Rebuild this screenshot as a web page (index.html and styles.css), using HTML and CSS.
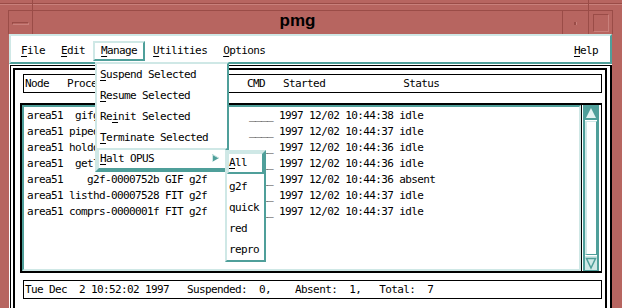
FILE: index.html
```html
<!DOCTYPE html>
<html>
<head>
<meta charset="utf-8">
<title>pmg</title>
<link rel="stylesheet" href="styles.css">
</head>
<body>
<div class="win">
  <div class="tb-top"><div class="tt-l"></div><div class="tt-m"></div><div class="tt-r"></div></div>
  <div class="tb-main">
    <div class="edge-l"></div>
    <div class="tb-btn btn-min"><span class="min-bar"></span></div>
    <div class="title">pmg</div>
    <div class="tb-btn btn-dot"><span class="dot"></span></div>
    <div class="tb-btn btn-max"><span class="sq"></span></div>
    <div class="edge-r"></div>
  </div>
  <div class="client">
    <div class="menubar">
      <span class="mi"><u>F</u>ile</span>
      <span class="mi"><u>E</u>dit</span>
      <span class="mi active"><u>M</u>anage</span>
      <span class="mi"><u>U</u>tilities</span>
      <span class="mi"><u>O</u>ptions</span>
      <span class="spacer"></span>
      <span class="mi"><u>H</u>elp</span>
    </div>
    <div class="outer">
      <div class="inner">
        <div class="hdr">Node   Process                       CMD   Started             Status</div>
        <div class="listframe">
          <div class="list">
<div class="row">area51  gifgen-000752b GIF gif       ____ 1997 12/02 10:44:38 idle</div>
<div class="row">area51 pipedr-0000752b GIF g2f       ____ 1997 12/02 10:44:37 idle</div>
<div class="row">area51 holddr-0000752b GIF g2f       ____ 1997 12/02 10:44:36 idle</div>
<div class="row">area51  getlst-000752b GIF g2f       ____ 1997 12/02 10:44:36 idle</div>
<div class="row">area51    g2f-0000752b GIF g2f       ____ 1997 12/02 10:44:36 absent</div>
<div class="row">area51 listhd-00007528 FIT g2f       ____ 1997 12/02 10:44:37 idle</div>
<div class="row">area51 comprs-0000001f FIT g2f       ____ 1997 12/02 10:44:37 idle</div>
          </div>
          <div class="divider"></div>
          <div class="sb">
            <svg class="sb-arrow" width="12" height="14" viewBox="0 0 12 14"><rect width="12" height="14" fill="#4f9f9a"/><polygon points="6,2 11,12 1,12" fill="#e4f3f2"/></svg>
            <div class="thumb"></div>
            <svg class="sb-arrow" width="12" height="14" viewBox="0 0 12 14"><rect width="12" height="14" fill="#cfe8e6"/><polygon points="1.5,2.5 10.5,2.5 6,12" fill="#cfe8e6" stroke="#4f9f9a" stroke-width="1.5"/></svg>
          </div>
        </div>
        <div class="status">Tue Dec  2 10:52:02 1997   Suspended:  0,    Absent:  1,   Total:  7</div>
      </div>
    </div>

    <div class="dropdown">
      <div class="dd-item"><u>S</u>uspend Selected</div>
      <div class="dd-item"><u>R</u>esume Selected</div>
      <div class="dd-item">Re<u>i</u>nit Selected</div>
      <div class="dd-item"><u>T</u>erminate Selected</div>
      <div class="dd-item active"><span><u>H</u>alt OPUS</span><svg class="casc" width="7" height="8" viewBox="0 0 7 8"><polygon points="0,0 7,4 0,8" fill="#4f9f9a"/><polyline points="0.5,8 0.5,0.5 6,3.6" fill="none" stroke="#cfe8e6" stroke-width="1"/></svg></div>
    </div>

    <div class="submenu">
      <div class="sm-item active"><u>A</u>ll</div>
      <div class="sm-item">g2f</div>
      <div class="sm-item">quick</div>
      <div class="sm-item">red</div>
      <div class="sm-item">repro</div>
    </div>
  </div>
</div>
</body>
</html>
```
FILE: styles.css
```css
:root {
  --red: #b76560;
  --red-dark: #9a4c47;
  --red-light: #c9807b;
  --teal: #4f9f9a;
  --light: #cfe8e6;
}

* { box-sizing: border-box; }

html, body {
  margin: 0;
  padding: 0;
}

body {
  width: 622px;
  height: 308px;
  overflow: hidden;
  background: var(--red);
  font-family: "DejaVu Sans Mono", monospace;
  font-size: 11px;
  letter-spacing: -0.62px;
  color: #000;
}

u {
  text-decoration: underline;
  text-underline-offset: 2px;
}

/* ---------- title bar ---------- */
.tb-top {
  display: flex;
  height: 10px;
}
.tt-l, .tt-m, .tt-r {
  height: 10px;
  background: linear-gradient(to bottom, transparent 3px, var(--red-dark) 3px, var(--red-dark) 4px, var(--red-light) 4px, var(--red-light) 5px, transparent 5px);
}
.tt-l { width: 33px; border-right: 1px solid var(--red-dark); }
.tt-m { width: 556px; border-right: 1px solid var(--red-dark); }
.tt-r { flex: 1; }

.tb-main {
  display: flex;
  height: 24px;
}
.edge-l { width: 8px; }
.edge-r { flex: 1; }
.tb-btn {
  display: flex;
  align-items: center;
  border-top: 1px solid var(--red-dark);
  border-left: 1px solid var(--red-dark);
}
.btn-min {
  width: 25px;
  border-right: 1px solid var(--red-dark);
  padding-left: 3px;
  padding-top: 1px;
}
.min-bar {
  display: block;
  width: 17px;
  height: 3px;
  border-top: 1px solid var(--red-dark);
  border-left: 1px solid var(--red-dark);
  border-bottom: 1px solid var(--red-light);
  border-right: 1px solid var(--red-light);
}
.title {
  width: 529px;
  border-top: 1px solid var(--red-dark);
  text-align: center;
  font-family: "Liberation Sans", Arial, sans-serif;
  font-weight: bold;
  font-size: 17px;
  letter-spacing: 0;
  line-height: 20px;
}
.btn-dot {
  width: 26px;
  justify-content: center;
  padding-top: 1px;
}
.dot {
  display: block;
  width: 3px;
  height: 3px;
  background: var(--red-dark);
  border-right: 1px solid var(--red-light);
}
.btn-max {
  width: 25px;
  border-right: 1px solid var(--red-dark);
  padding-left: 4px;
  padding-top: 1px;
}
.sq {
  display: block;
  width: 16px;
  height: 18px;
  border-top: 1px solid var(--red-dark);
  border-left: 1px solid var(--red-dark);
  border-bottom: 1px solid var(--red-light);
  border-right: 1px solid var(--red-light);
}

/* ---------- client ---------- */
.client {
  position: relative;
  margin-left: 9px;
  width: 603px;
  height: 274px;
  background: #fff;
}

.menubar {
  display: flex;
  height: 30px;
  border: 2px solid;
  border-color: var(--light) var(--teal) var(--teal) var(--light);
  padding: 5px 4px 1px 2px;
  background: #fff;
}
.mi {
  height: 20px;
  line-height: 16px;
  padding: 0 6px;
  border: 2px solid transparent;
  white-space: pre;
}
.mi.active {
  border-color: var(--light) var(--teal) var(--teal) var(--light);
}
.spacer { flex: 1; }

.outer {
  margin: 1px 0 0 1px;
  height: 243px;
  border: 1px solid #000;
  border-right-width: 2px;
  border-bottom: none;
  padding: 2px 3px 0 2px;
}
.inner {
  height: 100%;
  border: 2px solid #000;
  border-bottom: none;
}

.hdr, .status {
  margin: 4px 3px 0 8px;
  height: 19px;
  border: 1px solid #000;
  line-height: 17px;
  padding-left: 1px;
  white-space: pre;
}
.status { margin-top: 7px; }

.listframe {
  display: flex;
  margin: 10px 3px 0 5px;
  height: 170px;
  border: 2px solid #000;
  border-right-width: 1px;
}
.list {
  width: 559px;
  border: 2px solid;
  border-color: var(--teal) var(--light) var(--light) var(--teal);
  padding: 1px 0 0 3px;
  overflow: hidden;
}
.row {
  height: 16px;
  line-height: 16px;
  white-space: pre;
}
.divider {
  width: 1px;
  background: #000;
  margin-right: 1px;
}
.sb {
  width: 16px;
  margin-right: 1px;
  display: flex;
  flex-direction: column;
  border: 1px solid var(--teal);
  border-left-width: 2px;
  border-right-width: 2px;
  background: #fff;
}
.sb-arrow { display: block; flex: none; }
.thumb {
  flex: 1;
  margin: 1px 0;
  border-top: 1px solid var(--light);
  border-left: 2px solid var(--light);
  border-right: 1px solid var(--teal);
  border-bottom: 1px solid var(--teal);
}

/* ---------- menus ---------- */
.dropdown, .submenu {
  position: absolute;
  background: #fff;
  border: 2px solid;
  border-color: var(--light) var(--teal) var(--teal) var(--light);
}
.dropdown {
  left: 86px;
  top: 28px;
  width: 134px;
}
.dd-item {
  height: 21px;
  line-height: 21px;
  padding-left: 3px;
  white-space: pre;
}
.dd-item.active {
  display: flex;
  align-items: center;
  justify-content: space-between;
  height: 22px;
  line-height: 18px;
  padding-left: 1px;
  padding-right: 6px;
  border: 2px solid;
  border-color: var(--light) var(--teal) var(--teal) var(--light);
}
.casc { display: block; margin-top: -2px; }

.submenu {
  left: 216px;
  top: 116px;
  width: 41px;
}
.sm-item {
  height: 21px;
  line-height: 21px;
  padding-left: 2px;
  white-space: pre;
}
.sm-item.active {
  height: 22px;
  line-height: 18px;
  padding-left: 0;
  margin-bottom: 2px;
  border: 2px solid;
  border-color: var(--light) var(--teal) var(--teal) var(--light);
}
```
